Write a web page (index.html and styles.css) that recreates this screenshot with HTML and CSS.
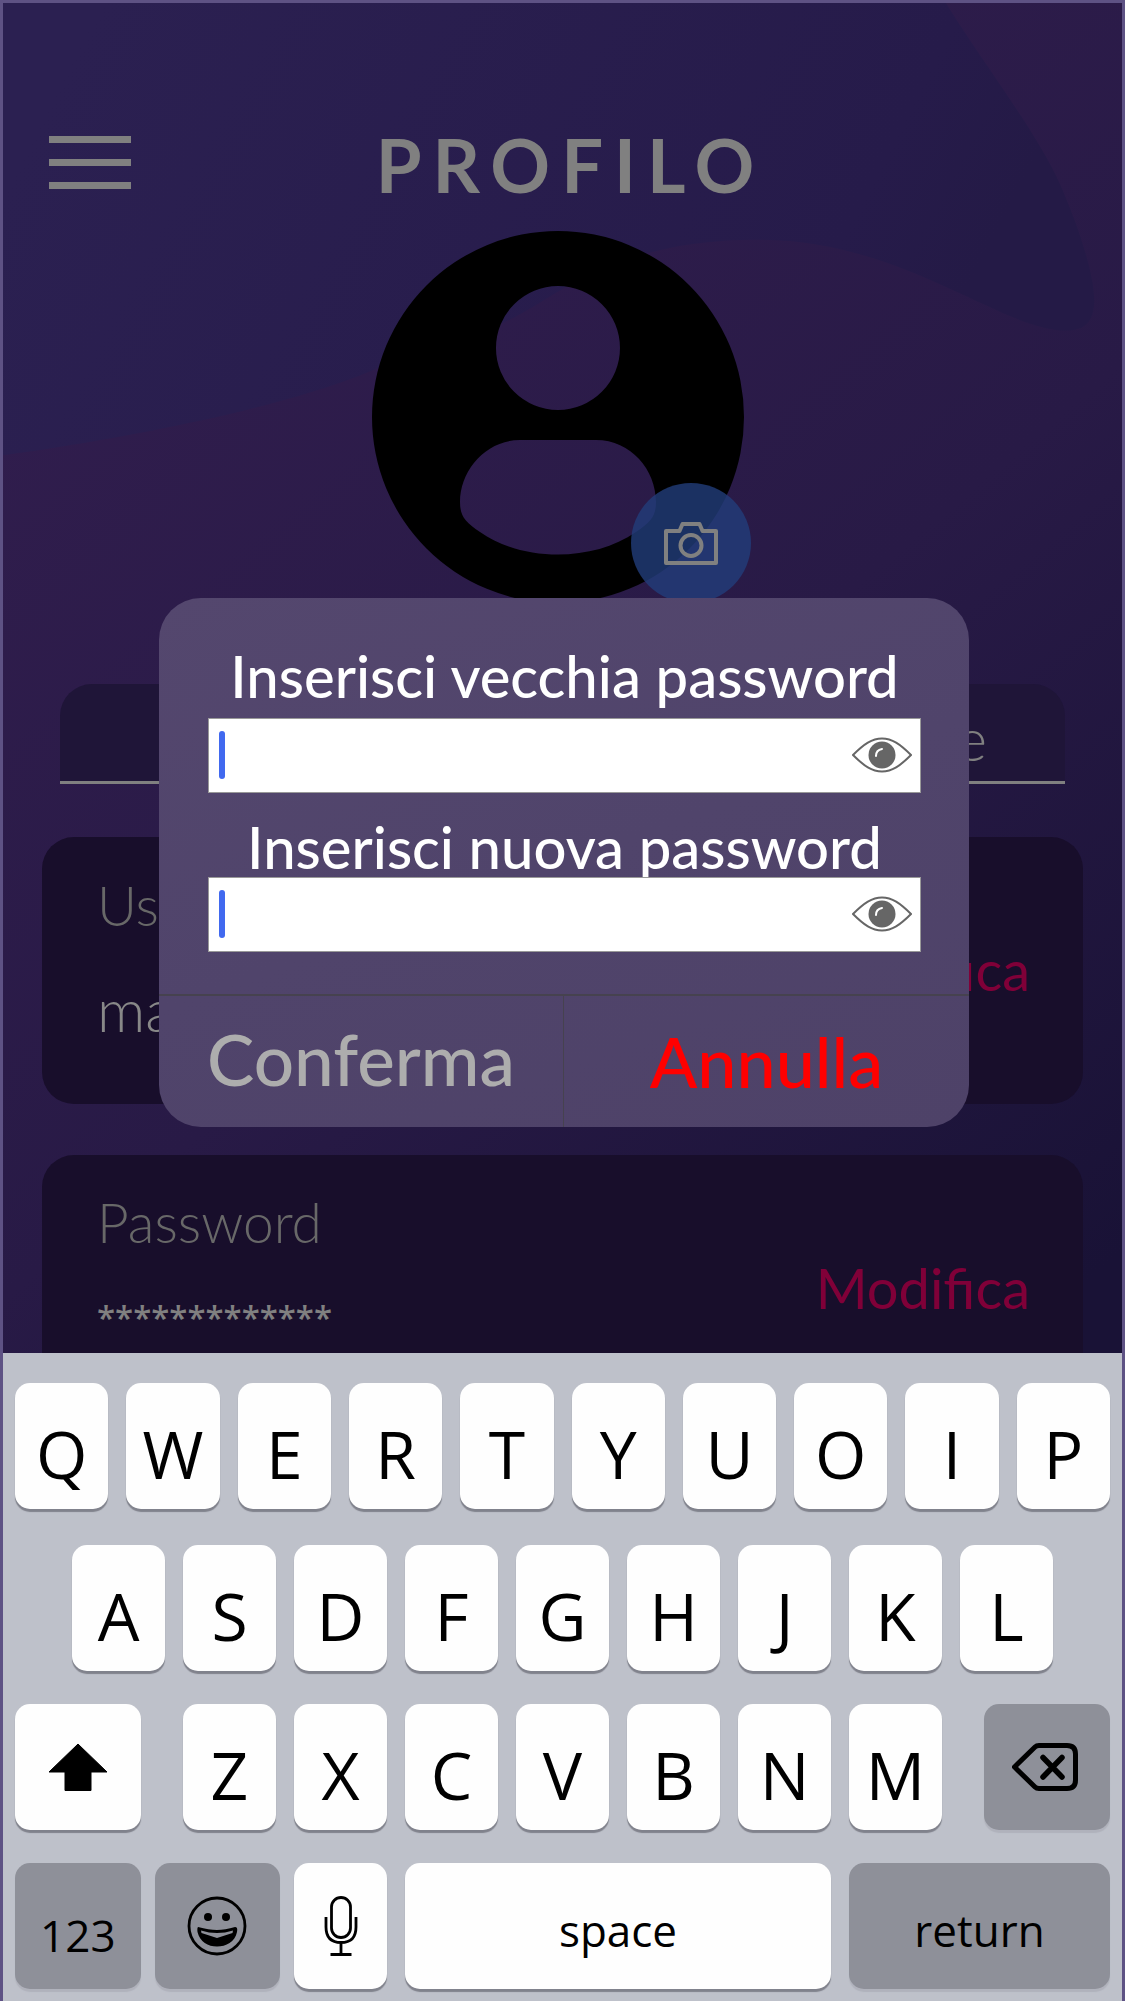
FILE: index.html
```html
<!DOCTYPE html>
<html lang="it">
<head>
<meta charset="utf-8">
<meta name="viewport" content="width=device-width, initial-scale=1">
<title>Profilo</title>
<link rel="stylesheet" href="styles.css">
</head>
<body>
<div class="screen">
  <svg class="backdrop" viewBox="0 0 1125 2001" preserveAspectRatio="none" aria-hidden="true">
    <defs>
      <linearGradient id="base" gradientUnits="userSpaceOnUse" x1="250" y1="200" x2="1125" y2="1250">
        <stop offset="0" stop-color="#301d4d"/><stop offset=".5" stop-color="#281a46"/><stop offset="1" stop-color="#191236"/>
      </linearGradient>
      <linearGradient id="wave" gradientUnits="userSpaceOnUse" x1="100" y1="0" x2="900" y2="420">
        <stop offset="0" stop-color="#2b2051"/><stop offset=".85" stop-color="#261b4a"/><stop offset="1" stop-color="#241a46"/>
      </linearGradient>
    </defs>
    <path fill="url(#base)" d="M0 0H1125V2001H0Z"/>
    <path fill="url(#wave)" d="M0 0H948C978 50 1040 130 1062 180C1082 225 1098 275 1097 300C1096 323 1084 328 1069 328C1003 328 905 237 760 237C660 237 600 262 540 300C480 338 425 345 359 373C270 407 130 435 0 453Z"/>
  </svg>

  <main class="profile">
    <header class="topbar">
      <button class="menu" type="button" aria-label="Menu"><i></i><i></i><i></i></button>
      <h1 class="title">PROFILO</h1>
    </header>

    <div class="avatar">
      <svg viewBox="0 0 372 372" aria-hidden="true">
        <path fill-rule="evenodd" d="M186 0a186 186 0 1 1 0 372a186 186 0 0 1 0-372ZM186 55a62 62 0 1 0 0 124a62 62 0 0 0 0-124ZM148 209C114 209 88 239 88 271C88 285 93 291 108 301C151 331 221 331 264 301C279 291 284 285 284 271C284 239 259 209 224 209Z"/>
      </svg>
      <button class="camera" type="button" aria-label="Cambia foto">
        <svg viewBox="0 0 54 43" aria-hidden="true"><path d="M2 9h13.500l3-7h17l3 7H52v32H2Z"/><circle cx="27" cy="23.500" r="10.500"/></svg>
      </button>
    </div>

    <input class="name" type="text" aria-label="Nome" value="Nome">

    <section class="card">
      <div><h2 class="card-label">Username</h2><p class="card-value">mario</p></div>
      <a class="edit" href="#username">Modifica</a>
    </section>
    <section class="card">
      <div><h2 class="card-label">Password</h2><p class="card-value stars">*************</p></div>
      <a class="edit" href="#password">Modifica</a>
    </section>
  </main>

  <div class="overlay">
    <form class="dialog" role="dialog" aria-label="Modifica password">
      <div class="fields">
        <label class="ask" for="old">Inserisci vecchia password</label>
        <div class="entry">
          <span class="caret"></span>
          <input id="old" type="password">
          <button class="eye" type="button" aria-label="Mostra vecchia password"><svg viewBox="0 0 60 36"><path class="lid" d="M1 18C12 7 20 1.500 30 1.500S48 7 59 18C48 29 40 34.500 30 34.500S12 29 1 18Z"/><circle cx="30" cy="18" r="13.500"/><path class="glint" d="M24 19q0-6 6-7"/></svg></button>
        </div>
        <label class="ask second" for="new">Inserisci nuova password</label>
        <div class="entry">
          <span class="caret"></span>
          <input id="new" type="password">
          <button class="eye" type="button" aria-label="Mostra nuova password"><svg viewBox="0 0 60 36"><path class="lid" d="M1 18C12 7 20 1.500 30 1.500S48 7 59 18C48 29 40 34.500 30 34.500S12 29 1 18Z"/><circle cx="30" cy="18" r="13.500"/><path class="glint" d="M24 19q0-6 6-7"/></svg></button>
        </div>
      </div>
      <div class="actions">
        <button class="confirm" type="submit">Conferma</button>
        <button class="cancel" type="button">Annulla</button>
      </div>
    </form>
  </div>

  <div class="keyboard">
    <div class="row row-top">
      <button class="key">Q</button><button class="key">W</button><button class="key">E</button><button class="key">R</button><button class="key">T</button><button class="key">Y</button><button class="key">U</button><button class="key">O</button><button class="key">I</button><button class="key">P</button>
    </div>
    <div class="row row-home">
      <button class="key">A</button><button class="key">S</button><button class="key">D</button><button class="key">F</button><button class="key">G</button><button class="key">H</button><button class="key">J</button><button class="key">K</button><button class="key">L</button>
    </div>
    <div class="row row-shift">
      <button class="key icon" aria-label="Maiuscole"><svg width="60" height="48" viewBox="0 0 60 48"><path d="M30 1L59 29H43V47.500H17V29H1Z" fill="#000" stroke="#000" stroke-linejoin="round"/></svg></button>
      <div class="row row-letters">
        <button class="key">Z</button><button class="key">X</button><button class="key">C</button><button class="key">V</button><button class="key">B</button><button class="key">N</button><button class="key">M</button>
      </div>
      <button class="key icon dark delete" aria-label="Cancella"><svg width="66" height="48" viewBox="0 0 66 48"><path d="M2.500 24L23 4Q24.500 2.500 27 2.500H55Q63.500 2.500 63.500 11V37Q63.500 45.500 55 45.500H27Q24.500 45.500 23 44Z" fill="none" stroke="#000" stroke-width="5" stroke-linejoin="round"/><path d="M31 14.500L50 34M50 14.500L31 34" stroke="#000" stroke-width="5.500" stroke-linecap="round"/></svg></button>
    </div>
    <div class="row row-space">
      <div class="row row-modes">
        <button class="key dark word numbers">123</button>
        <button class="key icon dark" aria-label="Emoji"><svg width="60" height="60" viewBox="0 0 60 60"><circle cx="30" cy="30" r="28" fill="none" stroke="#000" stroke-width="2.800"/><circle cx="21" cy="21" r="4"/><circle cx="39" cy="21" r="4"/><path fill-rule="evenodd" d="M11 31Q10 32 10.500 36C13 46 21 50.500 30 50.500S48 46 50 36Q51 31 48 31Q38 34 30 34Q22 34 11 31ZM14 34.500Q22 37 30 37Q38 37 46 34.500L45.500 37L30 42L14.500 37Z"/></svg></button>
        <button class="key icon" aria-label="Dettatura"><svg width="34" height="60" viewBox="0 0 34 60" fill="none" stroke="#000" stroke-width="2.800"><rect x="7.500" y="1.500" width="19" height="40" rx="9.500"/><path d="M2 21V31Q2 46.500 17 46.500Q32 46.500 32 31V21M17 46.500V58.500M6.500 58.500H27.500"/></svg></button>
      </div>
      <button class="key word">space</button>
      <button class="key dark word">return</button>
    </div>
  </div>
</div>
</body>
</html>
```
FILE: styles.css
```css
*{box-sizing:border-box}
body{margin:0;background:#191236}
button{border:0;padding:0;background:none;font:inherit;color:inherit;cursor:pointer}
h1,h2,p{margin:0;font-weight:400}
.screen{position:relative;min-height:100vh;overflow:hidden;border:3px solid #5e5284;border-bottom:0;font-family:Lato,"Open Sans",sans-serif}
.backdrop{position:absolute;inset:0;width:100%;height:100%}

.profile{position:relative;display:flex;flex-direction:column;padding:116px 39px 0}
.topbar{display:grid;grid-template-columns:84px 1fr 84px;align-items:center;height:92px;padding:0 7px}
.menu{display:flex;flex-direction:column;gap:16px;width:82px;margin-bottom:6px}
.menu i{height:7px;background:#808080}
.title{padding-left:16px;font-size:74px;line-height:88px;font-weight:700;letter-spacing:11px;text-align:center;color:#808080}
.avatar{position:relative;width:372px;height:372px;margin:20px auto 0;left:-5px}
.avatar svg{display:block;width:100%}
.camera{position:absolute;right:-7px;bottom:0;width:120px;height:120px;border-radius:50%;background:rgba(34,61,122,.8);display:grid;place-items:center}
.camera svg{width:54px;height:43px;fill:none;stroke:#808080;stroke-width:4;stroke-linejoin:round}
.name{height:100px;margin:81px 18px 53px;padding:10px 78px 0 0;border:0;border-bottom:3px solid #808080;border-radius:32px 32px 0 0;background:#1f1538;color:#808080;font:300 60px/86px Lato,sans-serif;text-align:right}
.card{display:flex;justify-content:space-between;align-items:center;height:267px;margin-bottom:51px;padding:0 53px 0 55px;border-radius:32px;background:#180e2b}
.card>div{padding-bottom:26px}
.card-label{font-size:55px;line-height:64px;font-weight:300;color:#686868}
.card-value{margin-top:38px;font-size:60px;line-height:68px;font-weight:300;color:#888}
.stars{margin-top:40px;padding-bottom:20px;font:600 33px/48px "Open Sans",sans-serif;color:#808080}
.edit{padding-bottom:2px;font-size:56px;line-height:64px;color:#800038;text-decoration:none}

.overlay{position:absolute;inset:0;padding:595px 153px 0 156px}
.dialog{overflow:hidden;border-radius:42px;background:linear-gradient(160deg,#54476e,#50446b 50%,#4e4268)}
.fields{display:flex;flex-direction:column;padding:46px 48px 42px 49px}
.ask{font-size:58px;line-height:64px;font-weight:500;text-align:center;color:#fff;margin-bottom:10px}
.ask.second{margin-top:22px;margin-bottom:-2px}
.entry{position:relative;display:flex;align-items:center;height:75px;padding-bottom:2px;border:1px solid #999;background:#fff}
.entry input{flex:1;min-width:0;height:100%;border:0;padding:0 8px;background:transparent;font-size:40px;outline:0}
.caret{width:6px;height:48px;margin-left:10px;border-radius:3px;background:#4169ef}
.eye{width:60px;height:36px;margin-right:8px}
.eye svg{display:block}
.eye circle{fill:#666}
.lid,.glint{fill:none;stroke:#666;stroke-width:2}
.glint{stroke:#fff;stroke-linecap:round}
.actions{display:grid;grid-template-columns:1fr 1fr;border-top:2px solid #46424f}
.actions button{height:131px;padding-bottom:6px;font-size:71px;line-height:80px;font-weight:500}
.actions .confirm{border-right:1px solid #46424f;color:#adadad}
.actions .cancel{padding-bottom:2px;font-size:70px;color:#f00}

.keyboard{position:absolute;left:-3px;right:-3px;bottom:0;display:flex;flex-direction:column;gap:33px;padding:30px 15px 12px;background:#bec1ca;font-family:"Open Sans","Noto Sans",sans-serif;color:#000}
.row{display:grid;gap:18px}
.row-top{grid-template-columns:repeat(10,1fr);margin-bottom:3px}
.row-home{grid-template-columns:repeat(9,1fr);padding:0 57px}
.row-shift{grid-template-columns:126fr 759fr 126fr;gap:42px}
.row-letters{grid-template-columns:repeat(7,1fr)}
.row-space{grid-template-columns:372fr 426fr 261fr}
.row-modes{grid-template-columns:126fr 126fr 93fr;gap:14px}
.key{display:flex;align-items:center;justify-content:center;height:126px;padding-top:14px;border-radius:15px;background:#fefefe;box-shadow:0 3px 1px #80828c;font-size:66px;line-height:90px}
.key.dark{background:#8e9099;box-shadow:0 3px 1px #b0b2bc}
.key.word{font-size:44px;line-height:64px;padding-top:8px}
.key.numbers{padding-top:18px}
.key.icon{padding:0}
.key.delete{padding-right:4px}
```
